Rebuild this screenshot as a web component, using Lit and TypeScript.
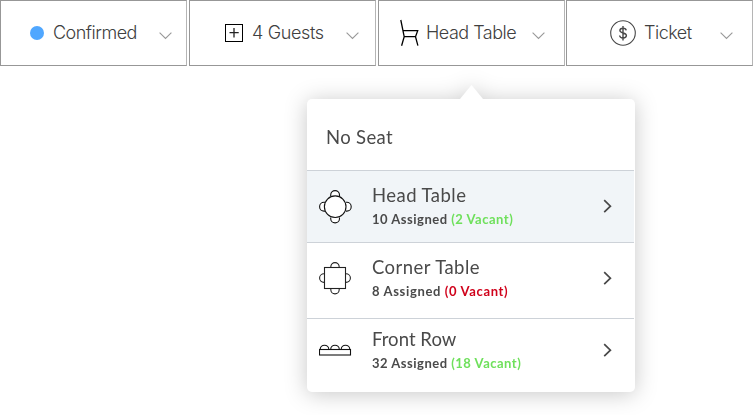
import { LitElement, html, css } from "lit";
import { customElement, property } from "lit/decorators.js";

const icons: Record<string, unknown> = {
  dot: html`<svg width="14" height="14" viewBox="0 0 14 14"><circle cx="7" cy="7" r="7" fill="#50a7ff" /></svg>`,
  plus: html`<svg width="18" height="18" viewBox="0 0 18 18" fill="none" stroke="#000">
    <rect x="0.5" y="0.5" width="17" height="17" /><path d="M9 4v9.4M4.5 8.6h9.2" stroke-width="1.3" stroke="#222" /></svg>`,
  chair: html`<svg width="19" height="28" viewBox="0 0 19 28" fill="none" stroke="#000" stroke-width="1.3">
    <path d="M.8 1l3.4 16.7L1.6 26.7M2.8 11.7h14.9L15.5 17.7 17.9 26.7M4.2 17.7h11.3" /></svg>`,
  dollar: html`<svg width="26" height="26" viewBox="0 0 26 26" fill="none" stroke="#484848" stroke-width="1.1">
    <circle cx="13" cy="13" r="12.3" />
    <path d="M16.2 10.4C16 8.9 14.8 8.3 13 8.3c-1.9 0-3.1.8-3.1 2.3 0 3.2 6.5 1.6 6.5 5 0 1.5-1.3 2.4-3.3 2.4s-3.3-.8-3.5-2.5M13 6v14.4" stroke-width="1.4" /></svg>`,
};

const tables: Record<string, unknown> = {
  round: html`<svg width="34" height="34" viewBox="0 0 34 34" fill="#fff" stroke="#111" stroke-width="1.1">
    <path d="M11.7 6V5a4.4 4.4 0 0 1 8.8 0v1M11.7 27.5v1a4.4 4.4 0 0 0 8.8 0v-1M6 12.3H5a4.4 4.4 0 0 0 0 8.8h1M27 12.3h.8a4.4 4.4 0 0 1 0 8.8H27" />
    <circle cx="16.2" cy="16.7" r="10.8" /></svg>`,
  square: html`<svg width="34" height="34" viewBox="0 0 34 34" fill="none" stroke="#222" stroke-width="1.1">
    <rect x="5.5" y="5.5" width="21" height="21" />
    <path d="M11.8 5.5V5a4.2 4.4 0 0 1 8.4 0v.5M11.8 26.5v1a4.2 4.4 0 0 0 8.4 0v-1M5.5 11.8H5a4.4 4.3 0 0 0 0 8.6h.5M26.5 11.8h.5a4.4 4.3 0 0 1 0 8.6h-.5" /></svg>`,
  row: html`<svg width="34" height="34" viewBox="0 0 34 34" fill="none" stroke="#111" stroke-width="1.1">
    <rect x="0.5" y="15.5" width="31" height="5.5" />
    <path d="M1.2 15.5a4.2 4.2 0 0 1 8.6 0M11.7 15.5a4.2 4.2 0 0 1 8.6 0M22.2 15.5a4.2 4.2 0 0 1 8.6 0" /></svg>`,
};

@customElement("filter-button")
class FilterButton extends LitElement {
  @property() icon = "dot";
  @property() label = "";

  static styles = css`
    :host { display: flex; box-sizing: border-box; height: 66px; border: 1px solid #979797; border-right-color: #b5b5b5; background: #fff; align-items: center; }
    .icon { display: flex; flex: none; }
    .dot { margin-left: 29px; margin-right: 9px; }
    .plus { margin-left: 35px; margin-right: 9px; }
    .chair { margin-left: 21px; margin-right: 7px; }
    .dollar { margin-left: 43px; margin-right: 8px; }
    .label { flex: 1; font: 300 18px/24px Inter, "Liberation Sans", sans-serif; color: #404040; white-space: nowrap; letter-spacing: -0.5px; }
    .label.plus, .label.dot, .label.dollar, .label.chair { margin: 0; }
    .label.plus { letter-spacing: -0.35px; }
    .chevron { flex: none; margin: 5px 14px 0 0; }
    .chevron.wide { margin-right: 16px; }
    .chevron.far { margin-right: 19px; }
  `;

  render() {
    const shift = this.icon === "plus" ? "wide" : this.icon === "chair" || this.icon === "dollar" ? "far" : "";
    return html`<span class="icon ${this.icon}">${icons[this.icon]}</span>
      <span class="label ${this.icon}">${this.label}</span>
      <svg class="chevron ${shift}" width="13" height="8" viewBox="0 0 13 8" fill="none" stroke="#999" stroke-width="1.1"><path d="M.6.6l5.9 5.8L12.4.6" /></svg>`;
  }
}

@customElement("seat-option")
class SeatOption extends LitElement {
  @property() shape = "round";
  @property() name = "";
  @property() assigned = "";
  @property() vacant = "";
  @property() tone = "open";

  static styles = css`
    :host { display: flex; align-items: flex-start; box-sizing: border-box; margin-right: 1px; border-top: 1px solid #cdd2d8; color: #4a4a4a; font-family: Lato, "Liberation Sans", sans-serif; }
    .shape { display: flex; margin: 19px 18px 0 12px; }
    .text { flex: 1; padding-top: 12px; margin-left: 1px; white-space: nowrap; }
    .name { font-size: 18.5px; line-height: 24px; letter-spacing: 0.45px; }
    .name.row { letter-spacing: 0.05px; }
    .detail { font-size: 13px; line-height: 16px; font-weight: 700; letter-spacing: 0.5px; margin-top: 4px; }
    .detail.square { letter-spacing: 0.65px; }
    .open { color: #6fe05c; }
    .full { color: #d0021b; }
    .arrow { margin: 28px 22px 0 0; }
    .shape.row { margin-top: 15px; }
    .text.row { padding-top: 8px; }
    .arrow.row { margin-top: 24px; }
  `;

  render() {
    return html`<span class="shape ${this.shape}">${tables[this.shape]}</span>
      <div class="text ${this.shape}">
        <div class="name ${this.shape}">${this.name}</div>
        <div class="detail ${this.shape}">${this.assigned} Assigned <span class=${this.tone}>(${this.vacant} Vacant)</span></div>
      </div>
      <svg class="arrow ${this.shape}" width="9" height="14" viewBox="0 0 9 14" fill="none" stroke="#484848" stroke-width="1.7"><path d="M1.2 1.2l6.2 6-6.2 6" /></svg>`;
  }
}

@customElement("app-root")
class AppRoot extends LitElement {
  static styles = css`
    :host { display: block; height: 415px; overflow: hidden; background: #fff; }
    .bar { display: grid; grid-template-columns: 189px 189px 188px 187px; }
    .bar filter-button { width: 187px; }
    .panel { position: relative; box-sizing: border-box; width: 328px; height: 293px; margin: 33px 0 0 307px; border-radius: 5px; background: #fff; filter: drop-shadow(0 2px 11px rgba(0, 0, 0, 0.22)); display: grid; grid-template-rows: 71px 72px 76px 74px; }
    .pointer { position: absolute; left: 153px; top: -14px; width: 23px; height: 14px; background: #fff; clip-path: polygon(50% 0, 100% 100%, 0 100%); }
    .none { padding: 26px 0 0 19px; font: 18.5px/24px Lato, "Liberation Sans", sans-serif; letter-spacing: 0.35px; color: #4a4a4a; }
    .selected { background: #f1f5f8; }
  `;

  render() {
    return html`
      <div class="bar">
        <filter-button icon="dot" label="Confirmed"></filter-button>
        <filter-button icon="plus" label="4 Guests"></filter-button>
        <filter-button icon="chair" label="Head Table"></filter-button>
        <filter-button icon="dollar" label="Ticket"></filter-button>
      </div>
      <div class="panel">
        <div class="pointer"></div>
        <div class="none">No Seat</div>
        <seat-option class="selected" shape="round" name="Head Table" assigned="10" vacant="2"></seat-option>
        <seat-option shape="square" name="Corner Table" assigned="8" vacant="0" tone="full"></seat-option>
        <seat-option shape="row" name="Front Row" assigned="32" vacant="18"></seat-option>
      </div>`;
  }
}
